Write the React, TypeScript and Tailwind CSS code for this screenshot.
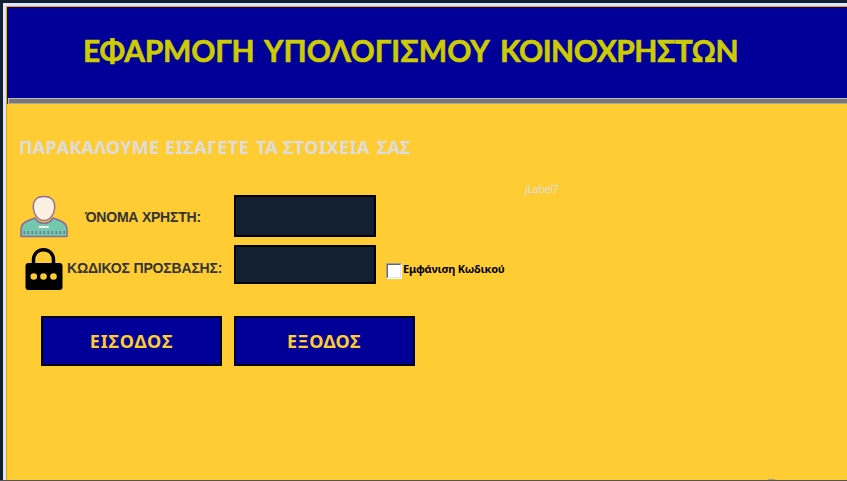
import React from "react";

function UserIcon() {
  return (
    <svg width="50" height="44" viewBox="0 0 50 44" className="block shrink-0">
      <path d="M2 41.500V35C2 28 7 26 16 23C20 30 30 30 34 23C43 26 48 28 48 35V41.500Z" fill="#73c8ae" stroke="#8a6d99" strokeWidth="1.6" strokeLinejoin="round" />
      <path d="M25 1.500C17 1.500 14 6 14.300 13C14.800 20 19.500 25.500 25 25.500C30.500 25.500 35.200 20 35.700 13C36 6 33 1.500 25 1.500Z" fill="#faefe0" stroke="#8a6d99" strokeWidth="1.4" />
      <path d="M20.500 32H29" stroke="#faefe0" strokeWidth="2" strokeLinecap="round" />
      <path d="M4.500 37.500H46" stroke="#6b7893" strokeWidth="3" strokeDasharray="1.5 2.5" />
    </svg>
  );
}

function LockIcon() {
  return (
    <svg width="38" height="44" viewBox="0 0 38 44" className="block shrink-0">
      <path d="M8.500 18V13C8.500 -0.800 28.500 -0.800 28.500 13V18" fill="none" stroke="#000" strokeWidth="3.500" />
      <rect x="0.500" y="16" width="37" height="27" rx="3" fill="#000" />
      <circle cx="8.800" cy="29.500" r="3.300" fill="#ffcc33" />
      <circle cx="18.500" cy="29.500" r="3.300" fill="#ffcc33" />
      <circle cx="28.500" cy="29.500" r="3.300" fill="#ffcc33" />
    </svg>
  );
}

export default function App() {
  return (
    <div className="flex h-[481px] w-[847px] flex-col overflow-hidden border-b border-[#555555] bg-[#132030] pt-[3px] pl-[3px]">
      <div className="flex min-h-0 grow flex-col bg-[#e0e6fa] pt-[3px] pl-[3px]">
        <div className="relative flex min-h-0 grow flex-col border-t border-l border-[#ff9f00] bg-[#ffcc33]">
          <header className="h-[91px] shrink-0 border-l border-[#101040] bg-[#000099] pt-[23px] pl-[75px]">
            <h1 className="flex font-['Lato',sans-serif] text-[30px] leading-[40px] font-bold whitespace-nowrap text-[#cccc00] [-webkit-text-stroke:0.6px_#cccc00]">
              <span className="w-[181px] tracking-[-0.25px]">ΕΦΑΡΜΟΓΗ </span>
              <span className="w-[236px] tracking-[0.05px]">ΥΠΟΛΟΓΙΣΜΟΥ </span>
              <span className="tracking-[-0.5px]">ΚΟΙΝΟΧΡΗΣΤΩΝ</span>
            </h1>
          </header>
          <div className="flex h-[6px] shrink-0 border-l border-[#333333]">
            <div className="grow border-t border-b border-l border-t-[#c0c0c0] border-b-[#a8a8a0] border-l-[#c0c0c0] bg-[#777777]" />
          </div>
          <h2 className="mt-[32px] ml-[12px] flex h-[22px] font-['Noto_Sans',sans-serif] text-[18px] leading-[22px] font-bold whitespace-nowrap text-[#dddddd]">
            <span className="w-[146px] tracking-[0.2px]">ΠΑΡΑΚΑΛΟΥΜΕ </span>
            <span className="w-[91px] tracking-[0.55px]">ΕΙΣΑΓΕΤΕ </span>
            <span className="w-[27px] tracking-[0px]">ΤΑ </span>
            <span className="w-[94px] tracking-[0.45px]">ΣΤΟΙΧΕΙΑ </span>
            <span className="tracking-[0px]">ΣΑΣ</span>
          </h2>
          <div className="mt-[37px] ml-[12px] flex h-[42px]">
            <UserIcon />
            <label className="ml-[16px] w-[149px] pt-[12px] font-['Liberation_Sans',sans-serif] text-[14px] leading-[20px] font-bold tracking-[-0.22px] whitespace-nowrap text-[#333333]">ΌΝΟΜΑ ΧΡΗΣΤΗ:</label>
            <input className="h-[42px] w-[142px] border-2 border-black bg-[#132033] outline-none" />
          </div>
          <div className="mt-[8px] ml-[18px] flex h-[44px]">
            <div className="pt-[2px]"><LockIcon /></div>
            <label className="ml-[4px] w-[167px] pt-[13px] font-['Liberation_Sans',sans-serif] text-[14px] leading-[20px] font-bold tracking-[-0.18px] whitespace-nowrap text-[#333333]">ΚΩΔΙΚΟΣ ΠΡΟΣΒΑΣΗΣ:</label>
            <input className="h-[39px] w-[142px] border-2 border-black bg-[#132033] outline-none" />
            <div className="mt-[18px] ml-[10px] h-[16px] w-[16px] border border-t-[#a0a0a0] border-r-white border-b-white border-l-[#a0a0a0] bg-white">
              <div className="h-[14px] w-[14px] border border-t-[#696969] border-r-[#e3e3e3] border-b-[#e3e3e3] border-l-[#696969]" />
            </div>
            <span className="ml-[1px] pt-[16px] font-['Noto_Sans',sans-serif] text-[11px] leading-[16px] font-bold tracking-[-0.26px] whitespace-nowrap text-black">Εμφάνιση Κωδικού</span>
          </div>
          <div className="mt-[27px] ml-[34px] flex gap-[12px]">
            <button className="h-[50px] w-[181px] border-2 border-black bg-[#000099] font-['Noto_Sans',sans-serif] text-[18px] leading-[22px] font-bold tracking-[0.85px] text-[#ffcc33]">ΕΙΣΟΔΟΣ</button>
            <button className="h-[50px] w-[181px] border-2 border-black bg-[#000099] pr-[2px] pl-[1px] font-['Noto_Sans',sans-serif] text-[18px] leading-[22px] font-bold tracking-[0.4px] text-[#ffcc33]">ΕΞΟΔΟΣ</button>
          </div>
          <span className="absolute top-[175px] left-[518px] font-['Noto_Sans',sans-serif] text-[11px] leading-[14px] tracking-[-0.5px] text-[#dddddd]">jLabel7</span>
          <div className="absolute bottom-0 left-[761px] h-[1px] w-[7px] bg-[#b0a070]" />
        </div>
      </div>
    </div>
  );
}
